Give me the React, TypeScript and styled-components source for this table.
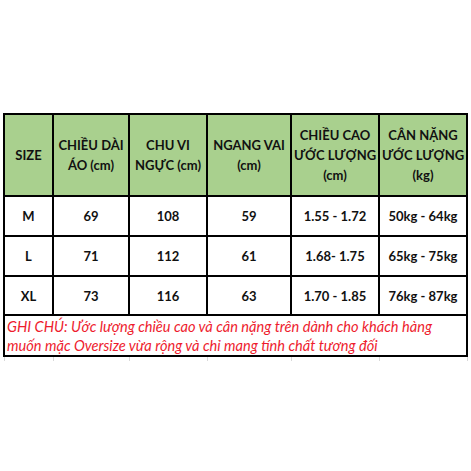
import React from 'react';
import styled, { createGlobalStyle } from 'styled-components';

const GlobalStyle = createGlobalStyle`
  html, body {
    margin: 0;
    padding: 0;
    background: #fff;
  }
`;

const COLS = '47px 74px 76px 82px 86px 86px';

const Styles = {
  Page: styled.div`
    width: 471px;
    height: 471px;
    padding: 113px 0 0 3px;
    box-sizing: border-box;
    font-family: Lato, 'Liberation Sans', sans-serif;
  `,
  Table: styled.div`
    display: grid;
    grid-template-columns: ${COLS};
    grid-template-rows: 80px 38px 38px 37px 39px;
    gap: 2px;
    padding: 2px;
    background: #000;
    width: max-content;
  `,
  Cell: styled.div<{ $head?: boolean }>`
    display: flex;
    align-items: center;
    justify-content: center;
    text-align: center;
    background: ${(p) => (p.$head ? '#a9d08e' : '#fff')};
    color: #111;
    font-weight: 700;
    font-size: 13px;
    line-height: 20px;
  `,
  Note: styled.div`
    grid-column: 1 / -1;
    background: #fff;
    color: #ee1c2e;
    font-style: italic;
    font-size: 14.6px;
    line-height: 19px;
    padding: 1px 0 0 2px;
    white-space: nowrap;
  `,
  Stubs: styled.div`
    display: grid;
    grid-template-columns: ${COLS};
    column-gap: 2px;
    padding: 0 2px;
    width: max-content;
    height: 4px;

    span {
      border-left: 1px solid #d9d9d9;
      margin-left: -1px;
    }

    span:last-child {
      border-right: 1px solid #d9d9d9;
      margin-right: -2px;
    }
  `,
};

const headers: React.ReactNode[] = [
  'SIZE',
  <>CHIỀU DÀI<br />ÁO (cm)</>,
  <>CHU VI<br />NGỰC (cm)</>,
  <>NGANG VAI<br />(cm)</>,
  <>CHIỀU CAO<br />ƯỚC LƯỢNG<br />(cm)</>,
  <>CÂN NẶNG<br />ƯỚC LƯỢNG<br />(kg)</>,
];

const rows = [
  ['M', '69', '108', '59', '1.55 - 1.72', '50kg - 64kg'],
  ['L', '71', '112', '61', '1.68- 1.75', '65kg - 75kg'],
  ['XL', '73', '116', '63', '1.70 - 1.85', '76kg - 87kg'],
];

const App = () => {
  return (
    <>
      <GlobalStyle />
      <Styles.Page>
        <Styles.Table>
          {headers.map((h, i) => (
            <Styles.Cell key={`h${i}`} $head>
              <div>{h}</div>
            </Styles.Cell>
          ))}
          {rows.map((r) =>
            r.map((v, i) => <Styles.Cell key={`${r[0]}${i}`}>{v}</Styles.Cell>)
          )}
          <Styles.Note>
            GHI CHÚ: Ước lượng chiều cao và cân nặng trên dành cho khách hàng
            <br />
            muốn mặc Oversize vừa rộng và chỉ mang tính chất tương đối
          </Styles.Note>
        </Styles.Table>
        <Styles.Stubs>
          {headers.map((_, i) => (
            <span key={i} />
          ))}
        </Styles.Stubs>
      </Styles.Page>
    </>
  );
};

export default App;
